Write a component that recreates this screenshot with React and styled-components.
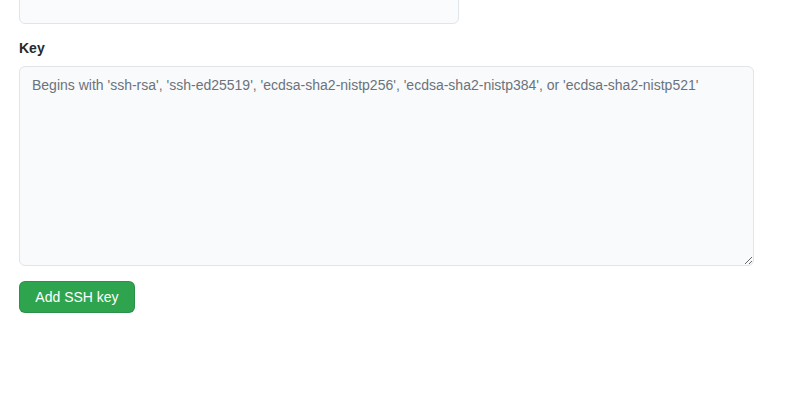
import React from "react";
import styled, { createGlobalStyle } from "styled-components";

const Global = createGlobalStyle`
  html, body { margin: 0; padding: 0; background: #fff; }
  body {
    font-family: "Liberation Sans", Arial, Helvetica, sans-serif;
    font-size: 14px;
    line-height: 1.5;
    color: #24292e;
  }
`;

const Page = styled.div`
  padding: 0 19px;
  display: flex;
  flex-direction: column;
`;

const TitleInput = styled.input`
  box-sizing: border-box;
  width: 440px;
  height: 33px;
  margin-top: -9px;
  padding: 5px 12px;
  font: inherit;
  background: #fafbfc;
  border: 1px solid #e1e4e8;
  border-radius: 6px;
  outline: none;
`;

const Group = styled.div`
  display: flex;
  flex-direction: column;
  margin-top: 14px;
`;

const Label = styled.label`
  font-weight: 700;
  font-size: 14px;
  line-height: 21px;
  margin-bottom: 7px;
`;

const KeyArea = styled.textarea`
  box-sizing: border-box;
  width: 735px;
  height: 200px;
  padding: 8px 12px;
  font: inherit;
  font-size: 14px;
  line-height: 20px;
  color: #24292e;
  background: #f9fafb;
  border: 1px solid #e1e4e8;
  border-radius: 6px;
  outline: none;
  resize: both;
  &::placeholder { color: #6a737d; }
`;

const Button = styled.button`
  align-self: flex-start;
  margin-top: 15px;
  box-sizing: border-box;
  width: 116px;
  height: 32px;
  padding: 5px 0;
  text-align: center;
  font: inherit;
  font-size: 14px;
  line-height: 20px;
  color: #fff;
  background: #2ea44f;
  border: 1px solid rgba(27, 31, 35, 0.15);
  border-radius: 6px;
  cursor: pointer;
`;

export default function App() {
  return (
    <>
      <Global />
      <Page>
        <TitleInput type="text" />
        <Group>
          <Label htmlFor="key">Key</Label>
          <KeyArea
            id="key"
            placeholder="Begins with 'ssh-rsa', 'ssh-ed25519', 'ecdsa-sha2-nistp256', 'ecdsa-sha2-nistp384', or 'ecdsa-sha2-nistp521'"
          />
        </Group>
        <Button>Add SSH key</Button>
      </Page>
    </>
  );
}
